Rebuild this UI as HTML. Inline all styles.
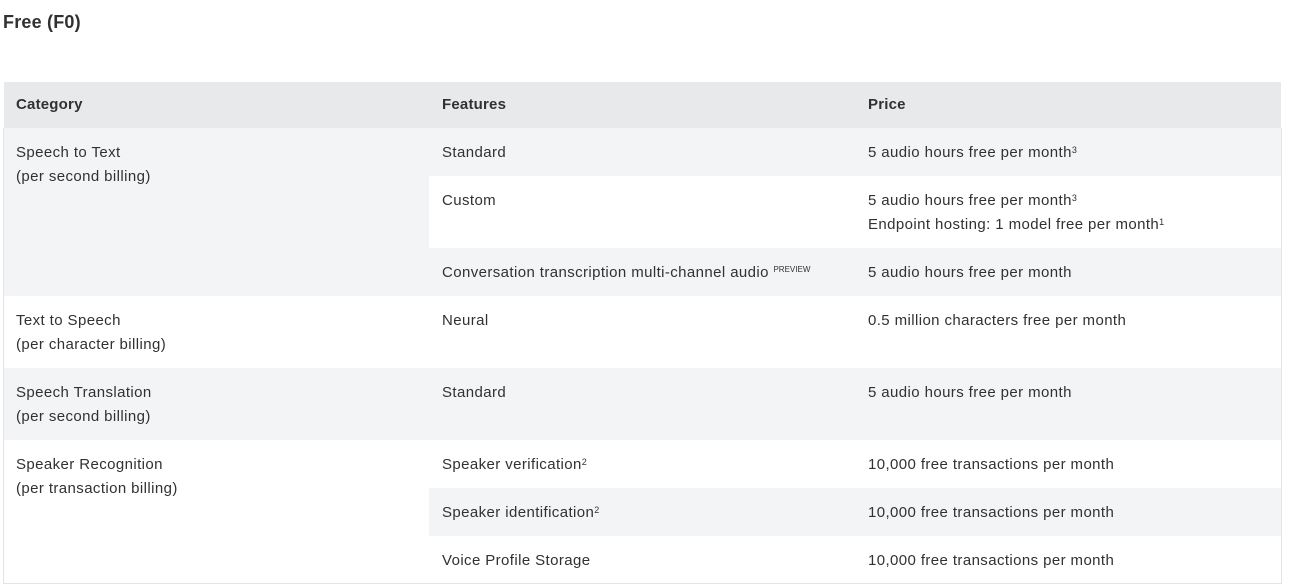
<!DOCTYPE html>
<html><head><style>
body{margin:0;background:#fff;font-family:"Liberation Sans",sans-serif;color:#323130;width:1298px;height:587px;overflow:hidden;position:relative}
.a{position:absolute}
.t{position:absolute;font-size:15px;letter-spacing:0.4px;line-height:24px;white-space:nowrap}
.b{font-weight:bold;letter-spacing:0.2px}
sup{font-size:9px;vertical-align:top;position:relative;top:-3px;letter-spacing:0}
.g{background:#f3f4f6}
</style></head><body>
<div class="t b" style="left:3px;top:10px;font-size:18px;">Free (F0)</div>
<div class="a" style="left:4px;top:82px;width:1277px;height:46px;background:#e8e9eb"></div>
<div class="a" style="left:3px;top:128px;width:1277px;height:455px;border:1px solid #e3e4e6;border-top:none"></div>
<div class="a g" style="left:4px;top:128px;width:1277px;height:168px"></div>
<div class="a" style="left:429px;top:176px;width:852px;height:72px;background:#fff"></div>
<div class="a g" style="left:4px;top:368px;width:1277px;height:72px"></div>
<div class="a g" style="left:429px;top:488px;width:852px;height:48px"></div>

<div class="t b" style="left:16px;top:93px">Category</div>
<div class="t b" style="left:442px;top:93px">Features</div>
<div class="t b" style="left:868px;top:93px">Price</div>

<div class="t" style="left:16px;top:141px">Speech to Text<br>(per second billing)</div>
<div class="t" style="left:442px;top:141px">Standard</div>
<div class="t" style="left:868px;top:141px">5 audio hours free per month<sup>3</sup></div>
<div class="t" style="left:442px;top:189px">Custom</div>
<div class="t" style="left:868px;top:189px">5 audio hours free per month<sup>3</sup><br>Endpoint hosting: 1 model free per month<sup>1</sup></div>
<div class="t" style="left:442px;top:261px">Conversation transcription multi-channel audio <sup style="font-size:8px">PREVIEW</sup></div>
<div class="t" style="left:868px;top:261px">5 audio hours free per month</div>

<div class="t" style="left:16px;top:309px">Text to Speech<br>(per character billing)</div>
<div class="t" style="left:442px;top:309px">Neural</div>
<div class="t" style="left:868px;top:309px">0.5 million characters free per month</div>

<div class="t" style="left:16px;top:381px">Speech Translation<br>(per second billing)</div>
<div class="t" style="left:442px;top:381px">Standard</div>
<div class="t" style="left:868px;top:381px">5 audio hours free per month</div>

<div class="t" style="left:16px;top:453px">Speaker Recognition<br>(per transaction billing)</div>
<div class="t" style="left:442px;top:453px">Speaker verification<sup>2</sup></div>
<div class="t" style="left:868px;top:453px">10,000 free transactions per month</div>
<div class="t" style="left:442px;top:501px">Speaker identification<sup>2</sup></div>
<div class="t" style="left:868px;top:501px">10,000 free transactions per month</div>
<div class="t" style="left:442px;top:549px">Voice Profile Storage</div>
<div class="t" style="left:868px;top:549px">10,000 free transactions per month</div>
</body></html>
